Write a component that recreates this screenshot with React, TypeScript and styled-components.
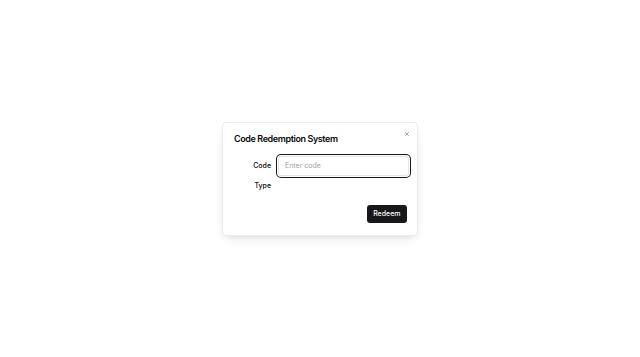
import styled, { createGlobalStyle } from "styled-components";

const GlobalStyle = createGlobalStyle`
  html, body {
    margin: 0;
    padding: 0;
    background: #ffffff;
    font-family: Inter, "Liberation Sans", sans-serif;
    color: #09090b;
  }
  * { box-sizing: border-box; }
`;

const Page = styled.div`
  height: 100vh;
  display: flex;
  align-items: center;
  justify-content: center;
`;

const Dialog = styled.div`
  position: relative;
  width: 196px;
  padding: 11px 10px 12px 11px;
  background: #ffffff;
  border: 1px solid #ececef;
  border-radius: 4px;
  box-shadow: 0 5px 12px -3px rgba(0, 0, 0, 0.1), 0 2px 5px -2px rgba(0, 0, 0, 0.08);
  display: flex;
  flex-direction: column;
  gap: 8px;
`;

const Close = styled.button`
  position: absolute;
  top: 7px;
  right: 6px;
  width: 8px;
  height: 8px;
  padding: 0;
  border: none;
  background: none;
  display: flex;
  align-items: center;
  justify-content: center;
  color: #71717a;
  cursor: pointer;
`;

const Title = styled.h2`
  margin: 0;
  font-size: 9px;
  line-height: 10px;
  font-weight: 600;
  letter-spacing: -0.4px;
`;

const Body = styled.div`
  display: flex;
  flex-direction: column;
  gap: 4px;
  padding: 4px 0 5px;
`;

const Row = styled.div<{ $tall?: boolean }>`
  display: grid;
  grid-template-columns: 37px 1fr;
  gap: 7px;
  align-items: center;
  min-height: ${(p) => (p.$tall ? "20px" : "12px")};
`;

const Label = styled.label`
  text-align: right;
  font-size: 7px;
  line-height: 10px;
  font-weight: 500;
`;

const Input = styled.input`
  width: 131px;
  height: 20px;
  padding: 0 6px;
  border: 1px solid #e4e4e7;
  border-radius: 3px;
  font-family: inherit;
  font-size: 7px;
  color: #09090b;
  outline: none;
  box-shadow: 0 0 0 1px #ffffff, 0 0 0 2px #18181b;
  &::placeholder {
    color: #a1a1aa;
  }
`;

const Footer = styled.div`
  display: flex;
  justify-content: flex-end;
`;

const Button = styled.button`
  height: 18px;
  padding: 0 6.5px;
  border: none;
  border-radius: 3px;
  background: #18181b;
  color: #fafafa;
  font-family: inherit;
  font-size: 7px;
  font-weight: 500;
  cursor: pointer;
`;

export default function App() {
  return (
    <>
      <GlobalStyle />
      <Page>
        <Dialog>
          <Close aria-label="Close">
            <svg width="6" height="6" viewBox="0 0 24 24" fill="none" stroke="currentColor" strokeWidth="2.5" strokeLinecap="round">
              <path d="M18 6 6 18" />
              <path d="m6 6 12 12" />
            </svg>
          </Close>
          <Title>Code Redemption System</Title>
          <Body>
            <Row $tall>
              <Label htmlFor="code">Code</Label>
              <Input id="code" placeholder="Enter code" autoFocus />
            </Row>
            <Row>
              <Label>Type</Label>
              <span />
            </Row>
          </Body>
          <Footer>
            <Button>Redeem</Button>
          </Footer>
        </Dialog>
      </Page>
    </>
  );
}
